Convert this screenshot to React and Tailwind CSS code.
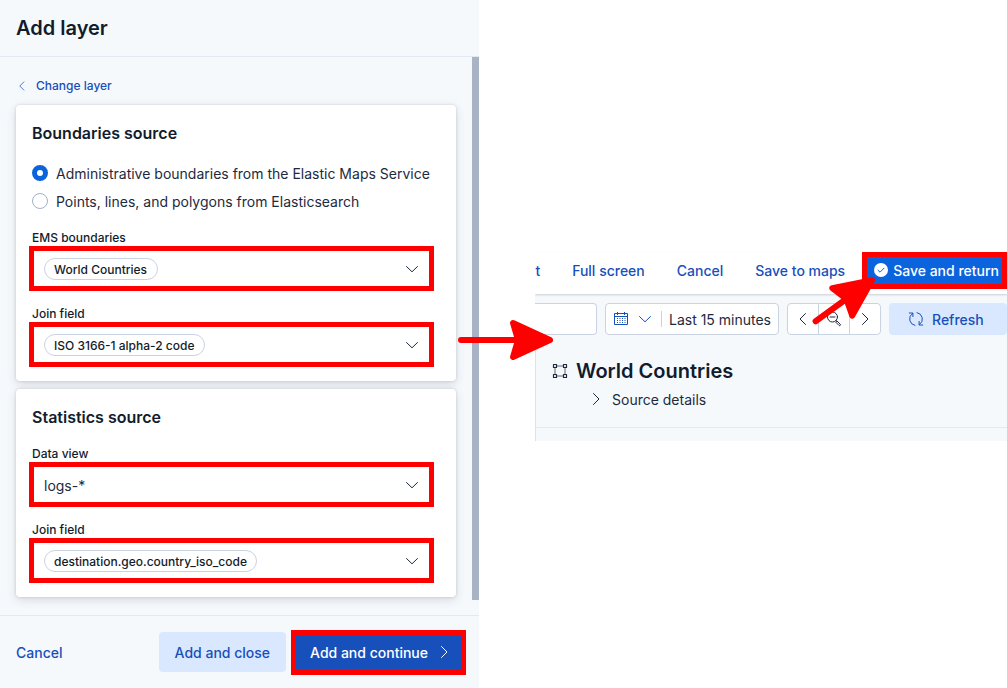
import { useId, useState } from 'react'

const SOURCES = [
  { id: 'ems', label: 'Administrative boundaries from the Elastic Maps Service' },
  { id: 'es', label: 'Points, lines, and polygons from Elasticsearch' },
]

const CHEVRONS = {
  left: 'M10.5 2.5 5 8l5.5 5.5',
  right: 'M5.5 2.5 11 8l-5.5 5.5',
  down: 'M2.5 5.5 8 10.8l5.5-5.3',
}

function Chevron({ dir, className = 'size-4' }) {
  return (
    <svg viewBox="0 0 16 16" className={className} fill="none" stroke="currentColor" strokeLinecap="round" strokeLinejoin="round" aria-hidden="true">
      <path d={CHEVRONS[dir]} />
    </svg>
  )
}

// Arrow pointing right, the tip 3px inside the box for the round stroke
function Arrow({ length = 96, className }) {
  const tip = length - 3
  return (
    <svg width={length} height="44" viewBox={`0 0 ${length} 44`} className={className} fill="#ff0000" stroke="#ff0000" strokeLinejoin="round" strokeLinecap="round" aria-hidden="true">
      <path d={`M4 22H${tip - 30}`} strokeWidth="6" />
      <path d={`M${tip} 22 ${tip - 37} 5l5 17-5 17Z`} strokeWidth="6" />
    </svg>
  )
}

function Card({ title, children }) {
  return (
    <section className="rounded bg-white px-4 pt-4 pb-[14px] shadow-[0_0_3px_rgba(43,57,79,0.18),0_3px_10px_rgba(43,57,79,0.16)]">
      <h2 className="text-base leading-6 font-semibold text-[#111c2c]">{title}</h2>
      {children}
    </section>
  )
}

function Field({ label, value, pill = true }) {
  const id = useId()
  return (
    <div>
      <label htmlFor={id} className="block text-xs leading-4 font-medium text-[#111c2c]">{label}</label>
      <div className="-ml-[3px] mr-[6px] flex h-[45px] items-center justify-between border-5 border-[#ff0000] bg-white pr-[9px] pl-[10px]">
        <select
          id={id}
          className={
            pill
              ? 'h-[22px] appearance-none rounded-full border border-[#cad3e2] px-[9px] pt-0.5 text-xs font-medium text-[#111c2c]'
              : 'h-[22px] appearance-none pt-0.5 text-sm text-[#1d2a3e]'
          }
        >
          <option>{value}</option>
        </select>
        <Chevron dir="down" className="size-4 text-[#1d2a3e]" />
      </div>
    </div>
  )
}

function AddLayerPanel() {
  const [source, setSource] = useState('ems')

  return (
    <aside className="flex w-[479px] shrink-0 flex-col bg-[#f6f9fc]">
      <header className="border-b border-[#e3e8f2] px-4 py-3">
        <h1 className="text-xl leading-8 font-semibold text-[#111c2c]">Add layer</h1>
      </header>

      <div className="flex flex-1">
        <div className="flex-1 px-4">
          <button className="mt-[19px] mb-[9px] flex h-5 items-center gap-2 text-xs font-medium text-[#1750ba]">
            <Chevron dir="left" className="size-3" />
            Change layer
          </button>

          <div className="flex flex-col gap-2">
            <Card title="Boundaries source">
              <div className="mt-[18px] mb-[19px] flex flex-col gap-2">
                {SOURCES.map(s => (
                  <label key={s.id} className="flex h-5 items-center gap-2 text-sm text-[#1d2a3e]">
                    <input
                      type="radio"
                      name="source"
                      checked={source === s.id}
                      onChange={() => setSource(s.id)}
                      className="size-4 appearance-none rounded-full border border-[#a2b1c9] bg-white checked:border-5 checked:border-[#0b64dd]"
                    />
                    <span className="pt-0.5">{s.label}</span>
                  </label>
                ))}
              </div>
              <div className="flex flex-col gap-[15px]">
                <Field label="EMS boundaries" value="World Countries" />
                <Field label="Join field" value="ISO 3166-1 alpha-2 code" />
              </div>
            </Card>

            <Card title="Statistics source">
              <div className="mt-[17px] flex flex-col gap-[15px]">
                <Field label="Data view" value="logs-*" pill={false} />
                <Field label="Join field" value="destination.geo.country_iso_code" />
              </div>
            </Card>
          </div>
        </div>
        {/* scrollbar thumb */}
        <div className="mb-[15px] w-[7px] bg-[#a8b3c6]" />
      </div>

      <footer className="flex h-[73px] items-center border-t border-[#e3e8f2] pr-[13px] pl-4 text-sm font-medium text-[#1750ba]">
        <button className="mr-auto pt-0.5">Cancel</button>
        <button className="mr-[5px] h-10 rounded bg-[#d9e8ff] px-4 pt-0.5">Add and close</button>
        <button className="flex h-[45px] items-center gap-2 border-5 border-[#ff0000] bg-[#1750ba] pr-[9px] pl-[14px] text-white">
          <span className="pt-0.5">Add and continue</span>
          <Chevron dir="right" />
        </button>
      </footer>
    </aside>
  )
}

function CalendarIcon() {
  return (
    <svg viewBox="0 0 16 16" className="size-4" fill="none" stroke="currentColor" aria-hidden="true">
      <path d="M1.5 2.5h13v11h-13zM1.5 5.5h13M4.5 1v3M11.5 1v3" />
      <path d="M4 7.5h9M4 9.5h9M4 11.5h9" strokeDasharray="1 1.5" />
    </svg>
  )
}

function ZoomOutIcon() {
  return (
    <svg viewBox="0 0 16 16" className="size-4" fill="none" stroke="currentColor" strokeLinecap="round" aria-hidden="true">
      <circle cx="6.5" cy="6" r="5" />
      <path d="M4 6h5M10.2 9.5l1 1" />
      <path d="m11.2 10.2 3 3a.8.8 0 0 1-1.2 1.2l-3-3Z" strokeLinejoin="round" />
    </svg>
  )
}

function RefreshIcon() {
  return (
    <svg viewBox="0 0 16 16" className="size-4" fill="none" stroke="currentColor" strokeLinecap="round" strokeLinejoin="round" aria-hidden="true">
      <path d="M7 14.4A6.6 6.6 0 0 1 4.6 2.4M1.3 2h3.6v3.6" />
      <path d="M9 1.6a6.6 6.6 0 0 1 2.4 12M14.7 14h-3.6v-3.6" />
    </svg>
  )
}

function PolygonIcon() {
  return (
    <svg viewBox="0 0 16 16" className="size-4 text-[#1d2a3e]" fill="none" stroke="currentColor" aria-hidden="true">
      <path d="M4.5 3h7M4.5 13h7M3 4.5v7M13 4.5v7" strokeOpacity="0.7" />
      <path d="M1.5 1.5h3v3h-3zM11.5 1.5h3v3h-3zM1.5 11.5h3v3h-3zM11.5 11.5h3v3h-3z" strokeLinejoin="round" strokeWidth="1.2" />
    </svg>
  )
}

function CheckIcon() {
  return (
    <svg viewBox="0 0 16 16" className="size-4" aria-hidden="true">
      <circle cx="8" cy="8" r="7" fill="#fff" />
      <path d="m5 8.2 2 2 4-4" fill="none" stroke="#0b64dd" strokeLinecap="round" strokeLinejoin="round" />
    </svg>
  )
}

function MapEditor() {
  return (
    <main className="relative ml-14 min-w-0 flex-1 self-center pt-1">
      <nav className="relative flex h-[42px] justify-end bg-white text-sm font-medium text-[#1750ba] shadow-[0_1px_2px_rgba(43,57,79,0.22)] [clip-path:inset(0_0_-4px_0)]">
        <div className="flex h-[37px] items-center gap-8 pt-0.5">
          <a href="#t">t</a>
          <a href="#full-screen">Full screen</a>
          <a href="#cancel">Cancel</a>
          <a href="#save">Save to maps</a>
        </div>
        <button className="ml-[17px] flex h-[37px] items-center gap-1 border-5 border-[#ff0000] bg-[#0b64dd] pr-[3px] pl-[6px] text-white">
          <CheckIcon />
          <span className="pt-0.5">Save and return</span>
        </button>
      </nav>

      <div className="bg-[#f6f9fc] pt-[9px]">
        <div className="flex h-8 gap-2 text-sm text-[#1d2a3e]">
          <input type="text" aria-label="Search" className="min-w-0 flex-1 rounded-r border border-l-0 border-[#cad3e2] bg-white" />
          <div className="flex items-center rounded border border-[#cad3e2] bg-white px-[7px]">
            <button aria-label="Quick select" className="flex gap-2 pr-2 text-[#1750ba]">
              <CalendarIcon />
              <Chevron dir="down" />
            </button>
            <button className="flex h-4 items-center border-l border-[#cad3e2] pl-[7px]">
              <span className="pt-0.5">Last 15 minutes</span>
            </button>
          </div>
          <div className="flex divide-x divide-[#cad3e2] rounded border border-[#cad3e2] bg-white">
            <button aria-label="Previous" className="px-[7px]"><Chevron dir="left" /></button>
            <button aria-label="Zoom out" className="px-[7px]"><ZoomOutIcon /></button>
            <button aria-label="Next" className="px-[7px]"><Chevron dir="right" /></button>
          </div>
          <button className="flex w-[118px] items-center gap-2 rounded bg-[#d9e8ff] pl-[19px] font-medium text-[#1750ba]">
            <RefreshIcon />
            <span className="pt-0.5">Refresh</span>
          </button>
        </div>

        <div className="mt-2 border-l border-[#dde3ed] pt-[14px]">
          <div className="flex items-center gap-2 pl-4">
            <PolygonIcon />
            <h2 className="text-xl leading-7 font-semibold text-[#111c2c]">World Countries</h2>
          </div>
          <button className="mb-4 ml-[52px] flex h-[26px] items-center gap-2 pt-[2px] text-sm text-[#1d2a3e]">
            <Chevron dir="right" />
            <span className="pt-0.5">Source details</span>
          </button>
          <div className="h-[14px] border-t border-[#e3e8f2]" />
        </div>
      </div>

      <Arrow className="absolute top-[70px] -left-[78px]" />
      <Arrow length={77} className="absolute top-[31px] right-[125px] -rotate-36" />
    </main>
  )
}

export default function App() {
  return (
    <div className="flex min-h-screen overflow-hidden bg-white font-[Inter,sans-serif]">
      <AddLayerPanel />
      <MapEditor />
    </div>
  )
}
